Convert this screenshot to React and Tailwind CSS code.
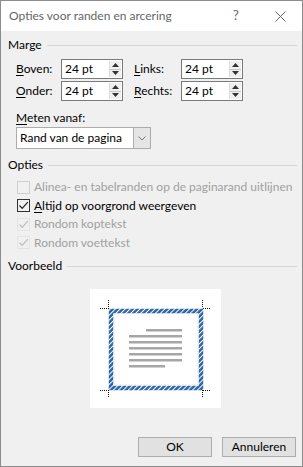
import React from 'react';

const font = { fontFamily: 'Lato, "Noto Sans", sans-serif' };

function Spin() {
  return (
    <div className="flex flex-col w-[12px] h-full border-l border-[#dcdcdc] bg-[#f0f0f0]">
      <div className="flex-1 flex items-center justify-center border-b border-[#c8c8c8]">
        <svg width="7" height="4" viewBox="0 0 7 4"><path d="M0 4 L3.5 0 L7 4 Z" fill="#333" /></svg>
      </div>
      <div className="flex-1 flex items-center justify-center">
        <svg width="7" height="4" viewBox="0 0 7 4"><path d="M0 0 L3.5 4 L7 0 Z" fill="#333" /></svg>
      </div>
    </div>
  );
}

function NumBox() {
  return (
    <div className="flex items-center w-[62px] h-[20px] bg-white border border-[#7a7a7a] p-[1px]">
      <span className="flex-1 pl-[2px] text-[12px] leading-none text-black">24 pt</span>
      <Spin />
    </div>
  );
}

function Label({ u, rest, w }) {
  return (
    <span className={`text-[12px] text-black whitespace-nowrap ${w}`}>
      <u className="underline-offset-2">{u}</u>
      {rest}
    </span>
  );
}

function Section({ title }) {
  return (
    <div className="flex items-center h-[16px] pl-[7px] pr-[5px]">
      <span className="text-[12px] text-black">{title}</span>
      <div className="flex-1 ml-[5px] border-t border-[#d5d5d5]" />
    </div>
  );
}

function Check({ checked, disabled, children }) {
  const box = disabled ? (checked ? 'border-[#e4e4e4]' : 'border-[#cfcfcf]') : 'border-[#333]';
  const mark = disabled ? '#bcbcbc' : '#222';
  return (
    <div className="flex items-center h-[18.5px] pl-[16px]">
      <div className={`w-[13px] h-[13px] border flex items-center justify-center ${box}`}>
        {checked && (
          <svg width="11" height="11" viewBox="0 0 11 11">
            <path d="M1.5 5.5 L4.2 8.3 L9.8 2.2" fill="none" stroke={mark} strokeWidth="1.2" />
          </svg>
        )}
      </div>
      <span className={`ml-[4px] text-[12px] whitespace-nowrap ${disabled ? 'text-[#a0a0a0]' : 'text-black'}`}>{children}</span>
    </div>
  );
}

function Preview() {
  const grey = '#a6a6a6';
  const dot = { stroke: '#111', strokeWidth: 1, strokeDasharray: '1 1' };
  return (
    <svg width="131" height="119" viewBox="0 0 131 119">
      <defs>
        <pattern id="hatch" width="3.5" height="3.5" patternUnits="userSpaceOnUse" patternTransform="rotate(45)">
          <rect width="3.5" height="3.5" fill="#2a64a3" />
          <rect width="1" height="3.5" fill="#ffffff" />
        </pattern>
      </defs>
      <rect x="0" y="0" width="131" height="119" fill="#ffffff" />
      <rect x="24.5" y="24.5" width="83" height="71" fill="none" stroke="#e2e2e2" strokeDasharray="1 2" />
      <rect x="21" y="22" width="90" height="77" fill="none" stroke="url(#hatch)" strokeWidth="4.5" />
      <line x1="10" y1="19.5" x2="19" y2="19.5" {...dot} />
      <line x1="18.5" y1="11" x2="18.5" y2="19" {...dot} />
      <line x1="113" y1="19.5" x2="121" y2="19.5" {...dot} />
      <line x1="112.5" y1="11" x2="112.5" y2="19" {...dot} />
      <line x1="10" y1="101.5" x2="19" y2="101.5" {...dot} />
      <line x1="18.5" y1="101" x2="18.5" y2="109" {...dot} />
      <line x1="113" y1="101.5" x2="121" y2="101.5" {...dot} />
      <line x1="112.5" y1="101" x2="112.5" y2="109" {...dot} />
      <rect x="56" y="40" width="36" height="2.5" fill={grey} />
      {[46, 52, 58, 64, 70].map((y) => (
        <rect key={y} x="39" y={y} width="53" height="2.5" fill={grey} />
      ))}
      <rect x="39" y="76" width="36" height="2.5" fill={grey} />
    </svg>
  );
}

export default function App() {
  return (
    <div style={font} className="w-[303px] h-[467px] bg-[#f0f0f0] border border-[#8c8c8c] flex flex-col overflow-hidden">
      <div className="h-[30px] bg-white flex items-center pl-[8px] text-[12px] text-[#666]">
        <span className="flex-1">Opties voor randen en arcering</span>
        <span className="w-[12px] text-[13px] mr-[30px]">?</span>
        <svg width="11" height="11" viewBox="0 0 11 11" className="mr-[16px]">
          <path d="M0.5 0.5 L10.5 10.5 M10.5 0.5 L0.5 10.5" stroke="#666" strokeWidth="1" />
        </svg>
      </div>

      <div className="mt-[6px]">
        <Section title="Marge" />
      </div>
      <div className="mt-[6px] flex flex-col gap-[2px] pl-[15px]">
        <div className="flex items-center">
          <Label u="B" rest="oven:" w="w-[45px]" />
          <NumBox />
          <span className="w-[11px]" />
          <Label u="L" rest="inks:" w="w-[47px]" />
          <NumBox />
        </div>
        <div className="flex items-center">
          <Label u="O" rest="nder:" w="w-[45px]" />
          <NumBox />
          <span className="w-[11px]" />
          <Label u="R" rest="echts:" w="w-[47px]" />
          <NumBox />
        </div>
      </div>

      <div className="mt-[9px] pl-[15px] h-[16px] flex items-center">
        <Label u="M" rest="eten vanaf:" w="" />
      </div>
      <div className="mt-[1px] ml-[15px] flex w-[135px] h-[22px] border border-[#acacac] bg-white">
        <span className="flex-1 flex items-center pl-[3px] text-[12px] text-black whitespace-nowrap">Rand van de pagina</span>
        <div className="w-[17px] bg-[#e5e5e5] border-l border-[#acacac] flex items-center justify-center">
          <svg width="8" height="5" viewBox="0 0 8 5"><path d="M0.5 0.5 L4 4 L7.5 0.5" fill="none" stroke="#777" /></svg>
        </div>
      </div>

      <div className="mt-[8px]">
        <Section title="Opties" />
      </div>
      <div className="mt-[5px] flex flex-col">
        <Check disabled>Alinea- en tabelranden op de paginarand uitlijnen</Check>
        <Check checked>
          <u className="underline-offset-2">A</u>ltijd op voorgrond weergeven
        </Check>
        <Check checked disabled>Rondom koptekst</Check>
        <Check checked disabled>Rondom voettekst</Check>
      </div>

      <div className="mt-[6px]">
        <Section title="Voorbeeld" />
      </div>
      <div className="mt-[15px] ml-[89px] w-[131px] h-[119px]">
        <Preview />
      </div>

      <div className="mt-[29px] flex justify-end gap-[10px] pr-[6px]">
        <button className="w-[74px] h-[20px] bg-[#e1e1e1] border border-[#adadad] text-[12px] text-black leading-none">OK</button>
        <button className="w-[74px] h-[20px] bg-[#e1e1e1] border border-[#adadad] text-[12px] text-black leading-none">Annuleren</button>
      </div>
    </div>
  );
}
